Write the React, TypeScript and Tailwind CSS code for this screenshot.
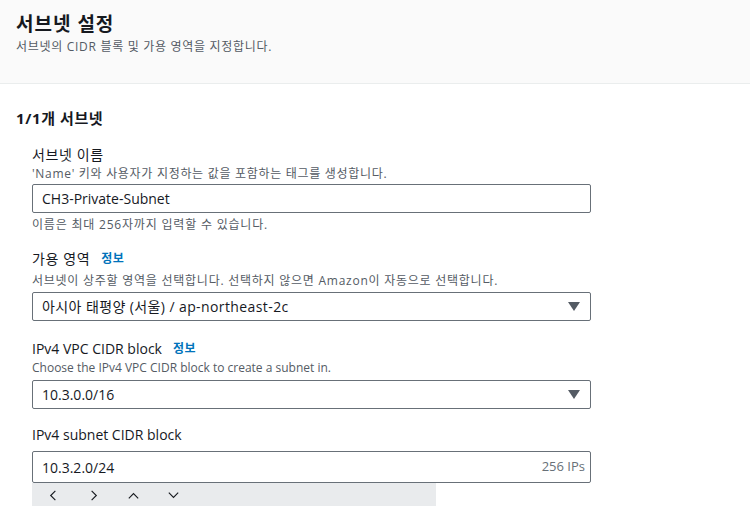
const font = { fontFamily: '"Open Sans", "Noto Sans CJK KR", sans-serif' };

function Caret() {
  return (
    <svg width="12" height="9" viewBox="0 0 12 9" className="shrink-0">
      <path d="M0 0 H12 L6 9 Z" fill="#545b64" />
    </svg>
  );
}

function Info() {
  return <span className="ml-[11px] text-[12px] font-bold text-[#0073bb] tracking-[0.6px]">정보</span>;
}

export default function App() {
  return (
    <div className="w-[750px] h-[506px] overflow-hidden bg-white text-[#16191f]" style={font}>
      {/* Header */}
      <div className="h-[84px] bg-[#fafafa] border-b border-[#eaeded] px-4 pt-[11px]">
        <h1 className="text-[19px] font-bold leading-[26px] tracking-[1px]">서브넷 설정</h1>
        <p className="mt-[1px] text-[12px] leading-[18px] text-[#545b64] tracking-[0.7px]">서브넷의 CIDR 블록 및 가용 영역을 지정합니다.</p>
      </div>

      <div className="px-4 pt-[24px]">
        <h2 className="text-[15px] font-bold leading-[20px] tracking-[0.6px]">1/1개 서브넷</h2>

        <div className="pl-4 w-[575px] pt-[17px]">
          {/* Name */}
          <div className="text-[14px] leading-[20px] tracking-[0.6px]">서브넷 이름</div>
          <div className="mt-[1px] text-[12px] leading-[16px] text-[#545b64] tracking-[0.7px]">
            'Name' 키와 사용자가 지정하는 값을 포함하는 태그를 생성합니다.
          </div>
          <div className="mt-[2px] h-[29px] border border-[#687078] rounded-[2px] flex items-center px-[9px] text-[14px]">
            CH3-Private-Subnet
          </div>
          <div className="mt-[3px] text-[12px] leading-[18px] text-[#545b64] tracking-[0.8px]">이름은 최대 256자까지 입력할 수 있습니다.</div>

          {/* AZ */}
          <div className="mt-[15px] text-[14px] leading-[20px] flex items-center tracking-[0.6px]">가용 영역<Info /></div>
          <div className="mt-[4px] text-[12px] leading-[16px] text-[#545b64] tracking-[0.75px]">
            서브넷이 상주할 영역을 선택합니다. 선택하지 않으면 Amazon이 자동으로 선택합니다.
          </div>
          <div className="mt-[3px] h-[29px] border border-[#687078] rounded-[2px] flex items-center justify-between pl-[9px] pr-[10px] text-[14px]">
            <span className="tracking-[0.4px]">아시아 태평양 (서울) / ap-northeast-2c</span>
            <Caret />
          </div>

          {/* VPC CIDR */}
          <div className="mt-[18px] text-[14px] leading-[20px] flex items-center">IPv4 VPC CIDR block<Info /></div>
          <div className="mt-[1px] text-[12px] leading-[16px] text-[#545b64]">Choose the IPv4 VPC CIDR block to create a subnet in.</div>
          <div className="mt-[4px] h-[29px] border border-[#687078] rounded-[2px] flex items-center justify-between pl-[9px] pr-[10px] text-[14px]">
            <span>10.3.0.0/16</span>
            <Caret />
          </div>

          {/* Subnet CIDR */}
          <div className="mt-[16px] text-[14px] leading-[20px]">IPv4 subnet CIDR block</div>
          <div className="mt-[6px] h-[32px] border border-[#687078] rounded-[2px] flex items-center justify-between pl-[9px] pr-[5px] text-[14px]">
            <span>10.3.2.0/24</span>
            <span className="text-[13px] text-[#687078]">256 IPs</span>
          </div>
          <div className="w-[404px] h-[24px] bg-[#e9ebed] flex items-center pl-[14px] gap-[25px] text-[#16191f]">
            <svg width="15" height="15" viewBox="0 0 16 16"><path d="M10 3 L5 8 L10 13" fill="none" stroke="currentColor" strokeWidth="1.2" /></svg>
            <svg width="15" height="15" viewBox="0 0 16 16"><path d="M6 3 L11 8 L6 13" fill="none" stroke="currentColor" strokeWidth="1.2" /></svg>
            <svg width="15" height="15" viewBox="0 0 16 16"><path d="M3 11 L8 6 L13 11" fill="none" stroke="currentColor" strokeWidth="1.2" /></svg>
            <svg width="15" height="15" viewBox="0 0 16 16"><path d="M3 5 L8 10 L13 5" fill="none" stroke="currentColor" strokeWidth="1.2" /></svg>
          </div>
        </div>
      </div>
    </div>
  );
}
